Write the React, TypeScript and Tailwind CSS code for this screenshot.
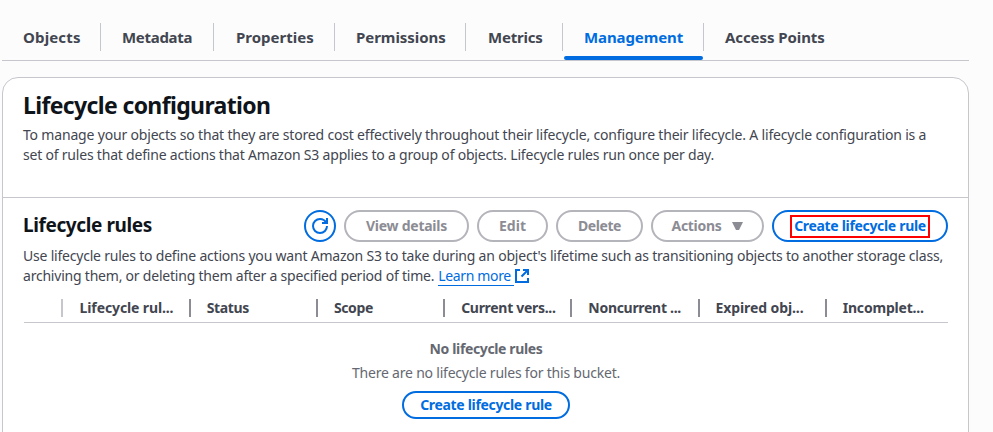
import type { ReactNode } from "react";

const tabs = [
  { label: "Objects", width: "w-[99px]", pad: "pl-[21px]", track: "tracking-[0.15px]" },
  { label: "Metadata", width: "w-[113px]", pad: "pl-[21px]", track: "tracking-[-0.3px]" },
  { label: "Properties", width: "w-[121px]", pad: "pl-[22px]", track: "tracking-[0px]" },
  { label: "Permissions", width: "w-[131px]", pad: "pl-[21px]", track: "tracking-[-0.05px]" },
  { label: "Metrics", width: "w-[97px]", pad: "pl-[22px]", track: "tracking-[-0.2px]" },
  { label: "Management", width: "w-[141px]", pad: "pl-[21px]", track: "tracking-[-0.1px]", active: true },
  { label: "Access Points", width: "w-[140px]", pad: "pl-[21px]", track: "tracking-[-0.08px]", last: true },
];

const columns = [
  { label: "Lifecycle rul...", track: "tracking-[-0.12px]" },
  { label: "Status", track: "tracking-[-0.4px]" },
  { label: "Scope", track: "tracking-[-0.4px]" },
  { label: "Current vers...", track: "tracking-[-0.3px]" },
  { label: "Noncurrent ...", track: "tracking-[-0.3px]" },
  { label: "Expired obj...", track: "tracking-[-0.1px]" },
  { label: "Incomplet...", track: "tracking-[-0.2px]" },
];

function Button({ className, children, primary }: { className: string; children: ReactNode; primary?: boolean }) {
  return (
    <button
      className={`flex shrink-0 items-center justify-center whitespace-nowrap rounded-full border-2 text-[14px] font-bold leading-5 ${
        primary ? "border-[#006ce0] text-[#006ce0]" : "border-[#b4b4bb] text-[#8c8c94]"
      } ${className}`}
    >
      {children}
    </button>
  );
}

function RefreshIcon() {
  return (
    <svg width="16" height="16" viewBox="0 0 16 16" fill="none" stroke="currentColor" strokeWidth="2">
      <path d="M15 8a7 7 0 1 1-7-7c3 0 5.2 1.7 6.4 4" />
      <path d="M15 0v5h-5" />
    </svg>
  );
}

function ExternalIcon() {
  return (
    <svg width="14" height="14" viewBox="0 0 14 14" fill="none" stroke="currentColor" strokeWidth="2">
      <path d="M5 1H1v12h12V9" />
      <path d="M8 1h5v5M13 1 6.5 7.5" />
    </svg>
  );
}

export default function App() {
  return (
    <div className="flex h-[432px] w-[993px] flex-col overflow-hidden bg-[#fcfcfd] pl-[2px] font-['Noto_Sans','Open_Sans',sans-serif] text-[#424650]">
      <nav className="flex h-[61px] w-[967px] shrink-0 border-b border-[#c6c6cd] pt-[23px]">
        {tabs.map((t) => (
          <div key={t.label} className={`flex h-[37px] shrink-0 flex-col justify-between ${t.width}`}>
            <div className={`flex h-7 items-center border-r ${t.last ? "border-transparent" : "border-[#c6c6cd]"} ${t.pad}`}>
              <span className={`whitespace-nowrap text-[15px] font-bold leading-5 ${t.track} ${t.active ? "text-[#006ce0]" : ""}`}>{t.label}</span>
            </div>
            {t.active && <div className="mx-px h-1 rounded-full bg-[#006ce0]" />}
          </div>
        ))}
      </nav>

      <section className="mt-4 h-[380px] w-[967px] shrink-0 rounded-t-[16px] border border-[#c6c6cd] bg-white">
        <header className="h-[120px] border-b border-[#c6c6cd] pl-5 pt-[12px]">
          <h1 className="text-[23px] font-bold leading-[30px] tracking-[-0.64px] text-[#0f141a]">Lifecycle configuration</h1>
          <p className="mt-[5px] whitespace-nowrap text-[14px] leading-5">
            <span className="tracking-[-0.18px]">
              To manage your objects so that they are stored cost effectively throughout their lifecycle, configure their lifecycle. A lifecycle configuration is a
            </span>
            <br />
            <span className="tracking-[-0.205px]">
              set of rules that define actions that Amazon S3 applies to a group of objects. Lifecycle rules run once per day.
            </span>
          </p>
        </header>

        <div className="flex h-11 w-[945px] items-end justify-between pl-5">
          <h2 className="mb-[3px] text-[19px] font-bold leading-7 tracking-[-0.4px] text-[#0f141a]">Lifecycle rules</h2>
          <div className="flex gap-2">
            <Button primary className="size-8"><RefreshIcon /></Button>
            <Button className="h-8 w-[125px] tracking-[-0.25px]">View details</Button>
            <Button className="h-8 w-[71px]">Edit</Button>
            <Button className="h-8 w-[87px] tracking-[-0.4px]">Delete</Button>
            <Button className="h-8 w-[113px] gap-[11px] tracking-[-0.3px]">
              Actions
              <svg width="11" height="8" viewBox="0 0 11 8" fill="currentColor"><path d="M0 0h11L7 8H4z" /></svg>
            </Button>
            <Button primary className="h-8 w-[176px]">
              <span className="flex h-[23px] w-[140px] items-center justify-center border-2 border-[#fd0000] tracking-[-0.32px]">Create lifecycle rule</span>
            </Button>
          </div>
        </div>

        <div className="mt-[4px] whitespace-nowrap pl-5 text-[14px] leading-5">
          <p className="tracking-[-0.21px]">
            Use lifecycle rules to define actions you want Amazon S3 to take during an object's lifetime such as transitioning objects to another storage class,
          </p>
          <p className="flex h-5 tracking-[-0.215px]">
            archiving them, or deleting them after a specified period of time.
            <a className="ml-[4px] flex h-5 text-[#006ce0]">
              <span className="h-5 w-[76px] border-b border-[#006ce0] tracking-[-0.35px]">Learn more</span>
              <span className="ml-px mt-[3px]"><ExternalIcon /></span>
            </a>
          </p>
        </div>

        <div className="ml-[21px] mt-[8px] flex h-[29px] w-[924px] items-center border-b border-[#c6c6cd] pb-px">
          <div className="mr-[0.6px] h-[18px] w-[39px] shrink-0 border-r-2 border-[#c6c6cd]" />
          {columns.map((c, i) => (
            <div key={c.label} className={`flex h-[18px] w-[127.2px] shrink-0 items-center whitespace-nowrap pl-[16px] text-[14px] font-bold ${c.track} ${i === columns.length - 1 ? "" : "border-r-2 border-[#8c8c94]"}`}>
              {c.label}
            </div>
          ))}
        </div>

        <div className="ml-[21px] mt-4 flex w-[924px] flex-col items-center text-[14px] leading-5 text-[#656871]">
          <strong className="tracking-[-0.37px]">No lifecycle rules</strong>
          <p className="mt-1 tracking-[-0.21px]">There are no lifecycle rules for this bucket.</p>
          <Button primary className="mt-[8px] h-7 w-[168px] tracking-[-0.32px]">Create lifecycle rule</Button>
        </div>
      </section>
    </div>
  );
}
